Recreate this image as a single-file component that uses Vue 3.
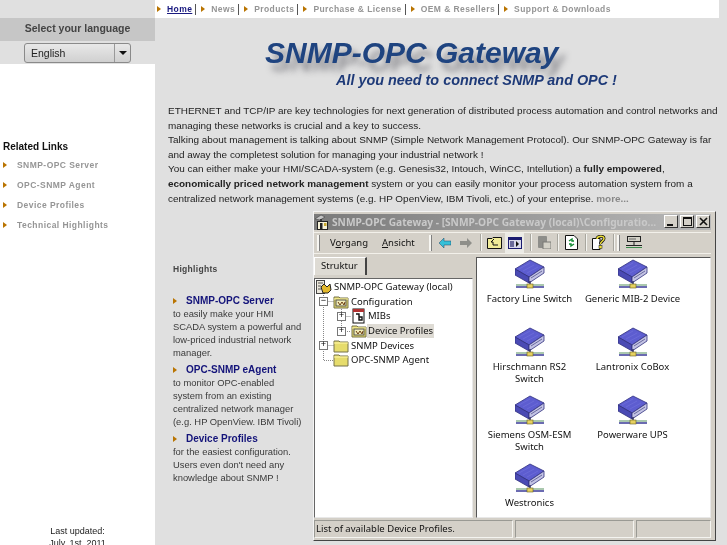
<template>
  <div class="page">
    <aside class="side">
      <div class="side-top"></div>
      <div class="lang-title">Select your language</div>
      <div class="lang-row">
        <div class="lang-select">
          <span class="lang-value">English</span>
          <span class="lang-btn"><i class="caret"></i></span>
        </div>
      </div>
      <div class="related">
        <h4>Related Links</h4>
        <a v-for="l in related" :key="l" class="rel-link"><i class="arrow"></i><span>{{ l }}</span></a>
      </div>
      <div class="updated">Last updated:<br>July, 1st, 2011</div>
    </aside>

    <main class="main">
      <nav class="nav">
        <template v-for="(n, i) in navItems" :key="n">
          <i class="arrow"></i>
          <a class="nav-link" :class="{ current: i === 0 }">{{ n }}</a>
          <span v-if="i < navItems.length - 1" class="nav-sep"></span>
        </template>
      </nav>

      <header class="hero">
        <h1>SNMP-OPC Gateway</h1>
        <h2>All you need to connect SNMP and OPC !</h2>
      </header>

      <p class="intro">
        ETHERNET and TCP/IP are key technologies for next generation of distributed process automation and control networks and<br>
        managing these networks is crucial and a key to success.<br>
        Talking about management is talking about SNMP (Simple Network Management Protocol). Our SNMP-OPC Gateway is far<br>
        and away the completest solution for managing your industrial network !<br>
        You can either make your HMI/SCADA-system (e.g. Genesis32, Intouch, WinCC, Intellution) a <b>fully empowered</b>,<br>
        <b>economically priced network management</b> system or you can easily monitor your process automation system from a<br>
        centralized network management systems (e.g. HP OpenView, IBM Tivoli, etc.) of your enteprise. <span class="more">more...</span>
      </p>

      <div class="lower">
        <section class="highlights">
          <h3>Highlights</h3>
          <div v-for="h in highlights" :key="h.title" class="hl">
            <div class="hl-title"><i class="arrow"></i>{{ h.title }}</div>
            <p><template v-for="t in h.lines" :key="t">{{ t }}<br></template></p>
          </div>
        </section>

        <section class="win">
          <svg width="0" height="0" class="defs">
            <defs>
              <g id="dev">
                <path d="M0 10 15 1 29 8 14 18Z" fill="#5d5dd0" stroke="#30307e" stroke-width=".8"/>
                <path d="M4 10 15 4M8 12 19 6M12 14 23 8" stroke="#7070da" stroke-width=".7"/>
                <path d="M0 10 14 18V24L0 16Z" fill="#4a4ab4" stroke="#30307e" stroke-width=".8"/>
                <path d="M14 18 29 8V14L14 24Z" fill="#c3c3e4" stroke="#30307e" stroke-width=".8"/>
                <path d="M16 19 27 12" stroke="#6a6a9c" stroke-width="1"/>
                <path d="M1 26H29" stroke="#86b08c" stroke-width="1.4"/>
                <path d="M1 28H29" stroke="#2c2c90" stroke-width="1.4"/>
                <path d="M15 22V26" stroke="#303060" stroke-width="1.4"/>
                <rect x="12" y="25" width="6" height="4" fill="#e6d060" stroke="#6a6020" stroke-width=".6"/>
              </g>
              <g id="fold">
                <path d="M1 3H6L7 4H15V14H1Z" fill="#e6dc6c" stroke="#77734a"/>
                <path d="M1 5H15" stroke="#fff7a8"/>
              </g>
              <g id="fold-w">
                <use href="#fold"/>
                <rect x="3" y="6" width="10" height="6" fill="#f2eeb8" stroke="#555"/>
                <path d="M5 8 7 11 9 8 11 11 12 8" fill="none" stroke="#6a3a10"/>
              </g>
            </defs>
          </svg>

          <div class="titlebar">
            <svg class="app-ico" width="16" height="16" viewBox="0 0 16 16">
              <path d="M1 5 7 1 11 3 6 6Z" fill="#c4c4c4" stroke="#444" stroke-width=".6"/>
              <path d="M7 5V8" stroke="#222" stroke-width="1.400"/>
              <rect x="3.500" y="7.500" width="10" height="8" fill="#f6f2d8" stroke="#222"/>
              <rect x="6" y="9" width="2.500" height="6" fill="#222"/>
              <rect x="10" y="9" width="2.500" height="3" fill="#c9a92e"/>
            </svg>
            <span class="win-title">SNMP-OPC Gateway - [SNMP-OPC Gateway (local)\Configuratio...</span>
            <span class="capbtn"><i class="c-min"></i></span>
            <span class="capbtn"><i class="c-max"></i></span>
            <span class="capbtn"><svg width="9" height="9" viewBox="0 0 9 9"><path d="M1 1 8 8M8 1 1 8" stroke="#111" stroke-width="1.6"/></svg></span>
          </div>

          <div class="toolbar">
            <span class="grip first"></span>
            <span class="menu"><span>V<u>o</u>rgang</span><span><u>A</u>nsicht</span></span>
            <span class="grip"></span>
            <svg class="tb-ico back" width="12" height="10" viewBox="0 0 12 10"><path d="M0 5 5 0V3H12V7H5V10Z" fill="#35c0d8" stroke="#246" stroke-width=".5"/></svg>
            <svg class="tb-ico fwd" width="12" height="10" viewBox="0 0 12 10"><path d="M12 5 7 0V3H0V7H7V10Z" fill="#8f8f8a"/></svg>
            <span class="tb-sep s1"></span>
            <svg class="tb-ico up" width="15" height="13" viewBox="0 0 15 13"><path d="M.5 2.500H5L6 1.500H14.500V12.500H.5Z" fill="#f1ec98" stroke="#111"/><path d="M7 3 4 6H6V9H11" fill="none" stroke="#111"/></svg>
            <span class="pressed">
              <svg width="14" height="12" viewBox="0 0 14 12"><rect x=".5" y=".5" width="13" height="11" fill="#d8d8ea" stroke="#1b1b70"/><rect x="1" y="1" width="12" height="2" fill="#1b1b70"/><rect x="2" y="4" width="4" height="6" fill="#6a6a9a"/><path d="M8 4V10L11 7Z" fill="#111"/></svg>
            </span>
            <span class="tb-sep s2"></span>
            <svg class="tb-ico copy" width="14" height="13" viewBox="0 0 14 13"><rect x="1" y="0" width="9" height="12" rx="1" fill="#8e8e8a"/><rect x="6" y="6" width="8" height="7" fill="#d4d2c8" stroke="#7a7a76"/></svg>
            <span class="tb-sep s3"></span>
            <svg class="tb-ico refresh" width="13" height="15" viewBox="0 0 13 15"><path d="M.5 .5H9L12.500 4V14.500H.5Z" fill="#fff" stroke="#111"/><path d="M4 6 7 4V6H9M9 9 6 11V9H4" fill="none" stroke="#118a30" stroke-width="1.4"/></svg>
            <span class="tb-sep s4"></span>
            <svg class="tb-ico help" width="14" height="15" viewBox="0 0 14 15"><path d="M.5 3.500H8V14.500H.5Z" fill="#fff" stroke="#111"/><path d="M5 4C5 1 12 0 12 3.500 12 6 8.500 6 8.500 9" fill="none" stroke="#111" stroke-width="3"/><path d="M5 4C5 1 12 0 12 3.500 12 6 8.500 6 8.500 9" fill="none" stroke="#f1e23a" stroke-width="1.500"/><rect x="7" y="10.500" width="3" height="3" fill="#f1e23a" stroke="#111" stroke-width=".5"/></svg>
            <span class="tb-sep s5"></span>
            <span class="grip g3"></span>
            <svg class="tb-ico net" width="16" height="13" viewBox="0 0 16 13"><rect x="1.500" y=".5" width="13" height="5" fill="#d4d2c8" stroke="#222"/><path d="M3 3H10" stroke="#666"/><path d="M8 6V9" stroke="#222"/><path d="M0 9.500H16" stroke="#222"/><path d="M0 11.500H16" stroke="#3a8a4a"/></svg>
          </div>

          <div class="panes">
            <div class="left-pane">
              <div class="tabs"><span class="tab">Struktur</span></div>
              <div class="tree">
                <svg class="tree-lines" width="60" height="100" viewBox="0 0 60 100">
                  <path d="M8.500 10V81.500H20M8.500 22.500H20M8.500 66.500H20M26.500 30V52.500H36M26.500 37.500H36" fill="none" stroke="#888" stroke-dasharray="1 1"/>
                </svg>
                <div class="row lvl0">
                  <svg width="18" height="16" viewBox="0 0 18 16"><rect x="1.500" y="1.500" width="8" height="13" fill="#ece8dc" stroke="#444"/><path d="M3 4H8M3 7H6M3 10H6" stroke="#555"/><path d="M6 8 9 5 12 8 15 5 16 11 13 14H8Z" fill="#e2b82c" stroke="#222"/></svg>
                  <span class="lbl">SNMP-OPC Gateway (local)</span>
                </div>
                <div class="row lvl1">
                  <span class="exp">&minus;</span>
                  <svg width="16" height="16" viewBox="0 0 16 16"><use href="#fold-w"/></svg>
                  <span class="lbl">Configuration</span>
                </div>
                <div class="row lvl2">
                  <span class="exp">+</span>
                  <svg width="16" height="16" viewBox="0 0 16 16"><rect x="2" y="1" width="11" height="14" fill="#fff" stroke="#111"/><rect x="2" y="1" width="11" height="3" fill="#b03030"/><path d="M5 6H8V9H11V12H8V9" fill="none" stroke="#111" stroke-width="1.400"/></svg>
                  <span class="lbl">MIBs</span>
                </div>
                <div class="row lvl2">
                  <span class="exp">+</span>
                  <svg width="16" height="16" viewBox="0 0 16 16"><use href="#fold-w"/></svg>
                  <span class="lbl sel">Device Profiles</span>
                </div>
                <div class="row lvl1">
                  <span class="exp">+</span>
                  <svg width="16" height="16" viewBox="0 0 16 16"><use href="#fold"/></svg>
                  <span class="lbl">SNMP Devices</span>
                </div>
                <div class="row lvl1">
                  <span class="exp none"></span>
                  <svg width="16" height="16" viewBox="0 0 16 16"><use href="#fold"/></svg>
                  <span class="lbl">OPC-SNMP Agent</span>
                </div>
              </div>
            </div>
            <div class="right-pane">
              <div v-for="d in devices" :key="d" class="device">
                <svg width="30" height="30" viewBox="0 0 30 30"><use href="#dev"/></svg>
                <span>{{ d }}</span>
              </div>
            </div>
          </div>

          <div class="status">
            <span class="st st1">List of available Device Profiles.</span>
            <span class="st st2"></span>
            <span class="st st3"></span>
          </div>
        </section>
      </div>
    </main>
  </div>
</template>

<script setup>
const related = ['SNMP-OPC Server', 'OPC-SNMP Agent', 'Device Profiles', 'Technical Highlights']
const navItems = ['Home', 'News', 'Products', 'Purchase & License', 'OEM & Resellers', 'Support & Downloads']
const highlights = [
  { title: 'SNMP-OPC Server', lines: ['to easily make your HMI', 'SCADA system a powerful and', 'low-priced industrial network', 'manager.'] },
  { title: 'OPC-SNMP eAgent', lines: ['to monitor OPC-enabled', 'system from an existing', 'centralized network manager', '(e.g. HP OpenView. IBM Tivoli)'] },
  { title: 'Device Profiles', lines: ['for the easiest configuration.', "Users even don't need any", 'knowledge about SNMP !'] }
]
const devices = [
  'Factory Line Switch', 'Generic MIB-2 Device',
  'Hirschmann RS2\nSwitch', 'Lantronix CoBox',
  'Siemens OSM-ESM\nSwitch', 'Powerware UPS',
  'Westronics'
]
</script>

<style>
html, body { margin: 0; overflow: hidden; background: #e0e0e0; }
</style>

<style scoped>
.page {
  display: flex;
  width: 727px;
  height: 545px;
  overflow: hidden;
  background: #e0e0e0;
  font-family: "Liberation Sans", Arial, sans-serif;
  filter: blur(.3px);
}
.side {
  width: 155px;
  flex: none;
  display: flex;
  flex-direction: column;
  background: #fff;
}
.side-top { height: 18px; background: #e0e0e0; }
.lang-title {
  height: 23px;
  line-height: 21px;
  background: #c6c6c6;
  text-align: center;
  font-size: 10.5px;
  font-weight: bold;
  color: #444;
}
.lang-row { height: 23px; background: #e0e0e0; padding: 2px 0 0 24px; box-sizing: border-box; }
.lang-select {
  width: 107px;
  height: 20px;
  display: flex;
  box-sizing: border-box;
  border: 1px solid #8a8a8a;
  border-radius: 3px;
  background: linear-gradient(#e8e8e8, #d0d0d0);
  font-size: 10.5px;
  color: #222;
  line-height: 18px;
}
.lang-value { flex: 1; padding-left: 6px; }
.lang-btn {
  width: 15px;
  border-left: 1px solid #999;
  display: flex;
  align-items: center;
  justify-content: center;
}
.caret { border: 4px solid transparent; border-top-color: #111; border-bottom: 0; }
.related { padding: 77px 0 0 3px; }
.related h4 { margin: 0 0 2px; font-size: 10px; line-height: 12px; color: #111; }
.rel-link {
  display: flex;
  align-items: center;
  height: 20px;
  font-size: 8.5px;
  font-weight: bold;
  letter-spacing: .45px;
  color: #959595;
}
.rel-link span { margin-left: 10px; }
.updated {
  margin-top: auto;
  margin-bottom: -4px;
  text-align: center;
  font-size: 9px;
  line-height: 12px;
  color: #222;
}
.arrow {
  display: inline-block;
  flex: none;
  width: 0;
  height: 0;
  border-left: 4px solid #b97400;
  border-top: 3.5px solid transparent;
  border-bottom: 3.5px solid transparent;
}

.main { flex: 1; min-width: 0; }
.nav {
  width: 564px;
  height: 18px;
  box-sizing: border-box;
  padding-left: 2px;
  display: flex;
  align-items: center;
  background: #fff;
  font-size: 8.5px;
  font-weight: bold;
  letter-spacing: .42px;
  color: #959595;
}
.nav-link { margin-left: 6px; }
.nav-link.current { color: #1a1a80; text-decoration: underline; }
.nav-sep { width: 1px; height: 11px; background: #555; margin: 0 5px 0 3px; }

.hero { height: 86px; box-sizing: border-box; padding-top: 17px; }
.hero h1 {
  margin: 0 0 0 110px;
  font-size: 30px;
  line-height: 36px;
  font-style: italic;
  font-weight: bold;
  color: #1f4480;
  white-space: nowrap;
  text-shadow: 6px 8px 6px rgba(60, 60, 70, .5);
}
.hero h2 {
  margin: 0 0 0 181px;
  font-size: 14.4px;
  line-height: 18px;
  font-style: italic;
  font-weight: bold;
  color: #1e3a78;
  white-space: nowrap;
}
.intro {
  margin: 0;
  padding-left: 13px;
  font-size: 9.95px;
  line-height: 14.6px;
  color: #222;
  white-space: nowrap;
}
.intro .more { color: #888; font-weight: bold; }

.lower { display: flex; margin-top: 4.8px; }
.highlights { width: 158px; flex: none; box-sizing: border-box; padding: 53px 0 0 18px; color: #3a3a3a; }
.highlights h3 {
  margin: 0 0 19px;
  font-size: 8.5px;
  line-height: 11px;
  letter-spacing: .3px;
  color: #444;
}
.hl { margin-bottom: 3.6px; }
.hl-title {
  display: flex;
  align-items: center;
  font-size: 10px;
  line-height: 14px;
  font-weight: bold;
  color: #14147a;
}
.hl-title .arrow { margin-right: 9px; }
.hl p {
  margin: 0;
  font-size: 9.4px;
  line-height: 12.9px;
  white-space: nowrap;
}

.win {
  width: 403px;
  height: 330px;
  flex: none;
  box-sizing: border-box;
  padding: 2px 4px 2px 0;
  display: flex;
  flex-direction: column;
  background: #d4d0c8;
  border-right: 1px solid #444;
  border-bottom: 1px solid #444;
  border-top: 1px solid #f4f4f4;
  border-left: 1px solid #f4f4f4;
  font-family: "Noto Sans", "Liberation Sans", sans-serif;
  font-size: 9.5px;
  color: #111;
}
.defs { position: absolute; }
.titlebar {
  height: 16px;
  flex: none;
  display: flex;
  align-items: center;
  padding-right: 1px;
  background: linear-gradient(90deg, #7b7b7b, #b8b8b8);
  color: #c9c9c9;
  font-weight: bold;
  font-size: 10.2px;
  white-space: nowrap;
}
.app-ico { flex: none; }
.win-title { margin-left: 2px; flex: 1; min-width: 0; overflow: hidden; }
.capbtn {
  width: 14px;
  height: 13px;
  flex: none;
  margin-left: 2px;
  display: flex;
  box-sizing: border-box;
  background: #d4d0c8;
  border: 1px solid;
  border-color: #fff #333 #333 #fff;
  justify-content: center;
  align-items: center;
}
.c-min { width: 6px; height: 2px; background: #111; margin-top: 6px; margin-right: 2px; }
.c-max { width: 7px; height: 6px; border: 1px solid #111; border-top-width: 2px; box-sizing: content-box; }

.toolbar {
  height: 22px;
  flex: none;
  margin-top: 2px;
  display: flex;
  align-items: center;
  border-top: 1px solid #f2f0ea;
  border-bottom: 1px solid #f2f0ea;
  box-sizing: border-box;
  background: #d4d0c8;
}
.grip {
  width: 2px;
  height: 16px;
  flex: none;
  background: #f7f6f2;
  border-right: 1px solid #808080;
}
.grip.first { margin-left: 3px; }
.grip.g3 { margin-left: 2px; }
.menu { width: 109px; flex: none; display: flex; gap: 14px; padding-left: 10px; box-sizing: border-box; }
.tb-ico { flex: none; }
.tb-sep { width: 1px; height: 17px; flex: none; background: #a8a69e; border-right: 1px solid #f4f4f0; }
.back { margin-left: 7px; }
.fwd { margin-left: 9px; }
.s1 { margin-left: 8px; }
.up { margin-left: 5px; }
.pressed {
  width: 19px;
  height: 20px;
  flex: none;
  margin-left: 3px;
  display: flex;
  align-items: center;
  justify-content: center;
  background: #ecebe6;
}
.s2 { margin-left: 6px; }
.copy { margin-left: 5px; }
.s3 { margin-left: 6px; }
.refresh { margin-left: 6px; }
.s4 { margin-left: 7px; }
.help { margin-left: 5px; }
.s5 { margin-left: 7px; }
.net { margin-left: 6px; }

.panes { flex: 1; min-height: 0; display: flex; margin-top: 3px; }
.left-pane { width: 162px; flex: none; display: flex; flex-direction: column; }
.tabs { height: 21px; flex: none; }
.tab {
  display: block;
  width: 53px;
  height: 18px;
  line-height: 16px;
  padding-left: 6px;
  box-sizing: border-box;
  border-top: 1px solid #fff;
  border-left: 1px solid #fff;
  border-right: 2px solid #444;
  background: #dedbd4;
}
.tree {
  flex: 1;
  position: relative;
  margin-right: 3px;
  padding-top: 1px;
  background: #fff;
  border: 1px solid;
  border-color: #666 #e8e8e8 #e8e8e8 #666;
}
.tree-lines { position: absolute; left: 0; top: 0; }
.row {
  height: 14.6px;
  display: flex;
  align-items: center;
  position: relative;
  white-space: nowrap;
}
.lvl1 { padding-left: 4px; }
.lvl2 { padding-left: 22px; }
.lbl { padding: 0 1px; line-height: 14px; margin-left: 1px; }
.lvl0 .lbl, .lvl2 .lbl { margin-left: 0; }
.sel { background: #dedbd4; }
.exp {
  width: 9px;
  height: 9px;
  flex: none;
  margin-right: 5px;
  box-sizing: border-box;
  border: 1px solid #777;
  background: #fff;
  font: 9px/7px "Liberation Mono", monospace;
  text-align: center;
  color: #000;
}
.exp.none { border: 0; background: none; }
.row svg { flex: none; }
.right-pane {
  flex: 1;
  min-width: 0;
  box-sizing: border-box;
  padding: 1px 0 0 1px;
  display: grid;
  grid-template-columns: 103px 103px;
  grid-auto-rows: 68px;
  background: #fff;
  border: 1px solid;
  border-color: #555 #e8e8e8 #e8e8e8 #555;
}
.device {
  display: flex;
  flex-direction: column;
  align-items: center;
  text-align: center;
  line-height: 12px;
  white-space: pre-line;
}
.device svg { flex: none; margin-bottom: 4px; }
.status { height: 20px; flex: none; display: flex; gap: 2px; padding-top: 2px; box-sizing: border-box; }
.st {
  height: 18px;
  flex: none;
  box-sizing: border-box;
  border: 1px solid;
  border-color: #9a9a94 #f4f4f0 #f4f4f0 #9a9a94;
  line-height: 16px;
  padding-left: 1px;
  white-space: nowrap;
}
.st1 { width: 199px; }
.st2 { width: 119px; }
.st3 { width: 75px; }
</style>
